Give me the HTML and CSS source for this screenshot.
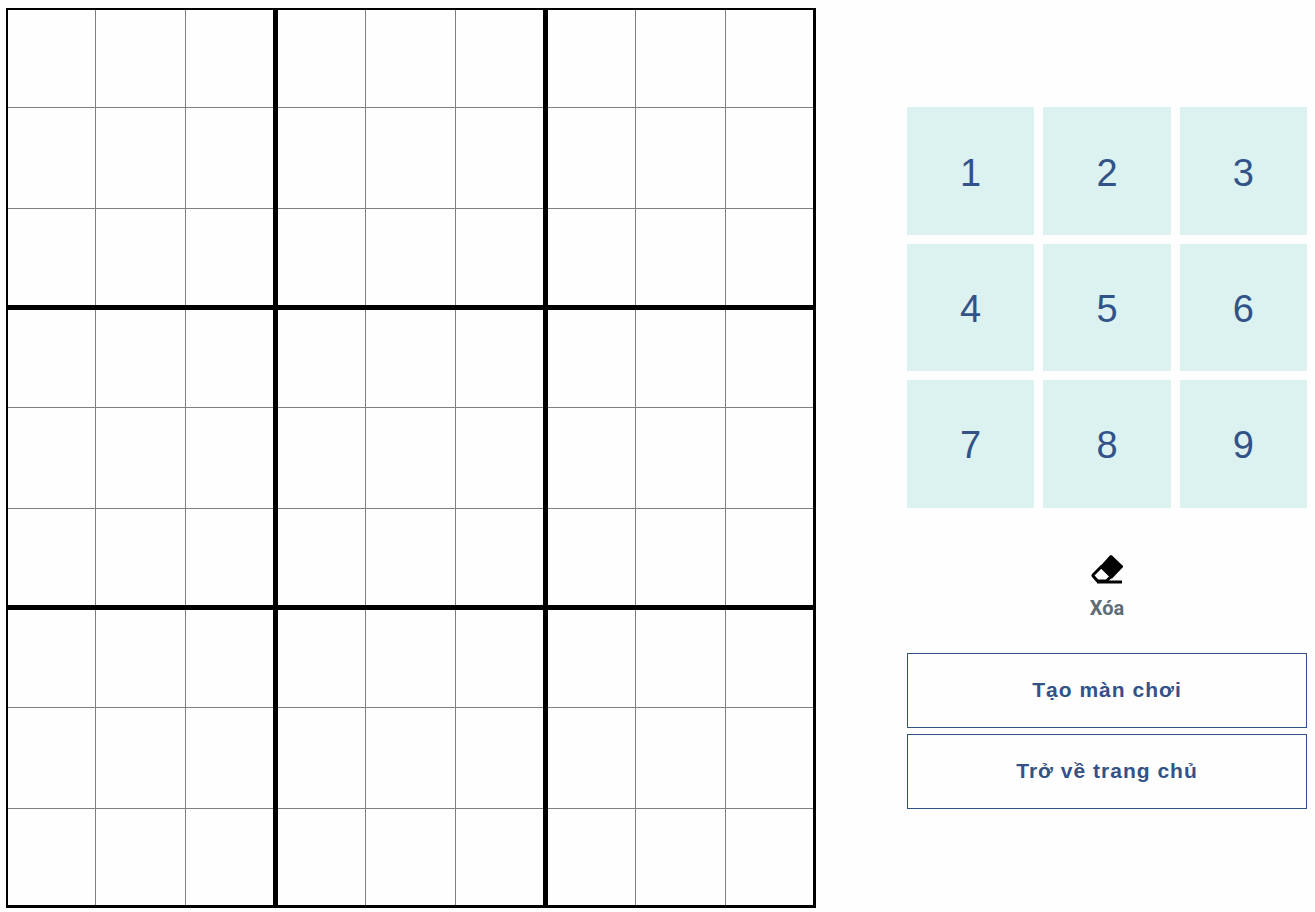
FILE: index.html
```html
<!DOCTYPE html>
<html lang="vi">
<head>
<meta charset="utf-8">
<meta name="viewport" content="width=device-width, initial-scale=1">
<title>Sudoku</title>
<link rel="stylesheet" href="styles.css">
</head>
<body>
<main class="game">
  <section class="board" aria-label="Sudoku">
    <div class="block"><div class="cell"></div><div class="cell"></div><div class="cell"></div><div class="cell"></div><div class="cell"></div><div class="cell"></div><div class="cell"></div><div class="cell"></div><div class="cell"></div></div>
    <div class="block"><div class="cell"></div><div class="cell"></div><div class="cell"></div><div class="cell"></div><div class="cell"></div><div class="cell"></div><div class="cell"></div><div class="cell"></div><div class="cell"></div></div>
    <div class="block"><div class="cell"></div><div class="cell"></div><div class="cell"></div><div class="cell"></div><div class="cell"></div><div class="cell"></div><div class="cell"></div><div class="cell"></div><div class="cell"></div></div>
    <div class="block"><div class="cell"></div><div class="cell"></div><div class="cell"></div><div class="cell"></div><div class="cell"></div><div class="cell"></div><div class="cell"></div><div class="cell"></div><div class="cell"></div></div>
    <div class="block"><div class="cell"></div><div class="cell"></div><div class="cell"></div><div class="cell"></div><div class="cell"></div><div class="cell"></div><div class="cell"></div><div class="cell"></div><div class="cell"></div></div>
    <div class="block"><div class="cell"></div><div class="cell"></div><div class="cell"></div><div class="cell"></div><div class="cell"></div><div class="cell"></div><div class="cell"></div><div class="cell"></div><div class="cell"></div></div>
    <div class="block"><div class="cell"></div><div class="cell"></div><div class="cell"></div><div class="cell"></div><div class="cell"></div><div class="cell"></div><div class="cell"></div><div class="cell"></div><div class="cell"></div></div>
    <div class="block"><div class="cell"></div><div class="cell"></div><div class="cell"></div><div class="cell"></div><div class="cell"></div><div class="cell"></div><div class="cell"></div><div class="cell"></div><div class="cell"></div></div>
    <div class="block"><div class="cell"></div><div class="cell"></div><div class="cell"></div><div class="cell"></div><div class="cell"></div><div class="cell"></div><div class="cell"></div><div class="cell"></div><div class="cell"></div></div>
  </section>
  <section class="controls">
    <div class="keypad">
      <button class="key" type="button">1</button>
      <button class="key" type="button">2</button>
      <button class="key" type="button">3</button>
      <button class="key" type="button">4</button>
      <button class="key" type="button">5</button>
      <button class="key" type="button">6</button>
      <button class="key" type="button">7</button>
      <button class="key" type="button">8</button>
      <button class="key" type="button">9</button>
    </div>
    <button class="erase" type="button">
      <svg class="erase-icon" viewBox="0 0 32 32" aria-hidden="true">
        <path d="M20 2.500 30.500 12.500 20.500 23 10.500 13Z" fill="#000" stroke="#000" stroke-width="3" stroke-linejoin="round"/>
        <path d="M11 12 2.500 20.500Q1.500 21.500 2.500 22.500L6.500 27H15.500L20 22.500" fill="none" stroke="#000" stroke-width="3" stroke-linejoin="round"/>
        <path d="M6 28H31" stroke="#000" stroke-width="3"/>
      </svg>
      <span>Xóa</span>
    </button>
    <div class="actions">
      <button class="action" type="button">Tạo màn chơi</button>
      <button class="action" type="button">Trở về trang chủ</button>
    </div>
  </section>
</main>
</body>
</html>
```
FILE: styles.css
```css
* { box-sizing: border-box; }

body {
  margin: 0;
  background: #fefefe;
  font-family: "Liberation Sans", Arial, sans-serif;
  color: #325288;
}

button {
  margin: 0;
  padding: 0;
  border: 0;
  background: none;
  color: inherit;
  font: inherit;
  cursor: pointer;
}

.game {
  display: grid;
  grid-template-columns: 81fr 40fr;
  column-gap: 91px;
  align-items: center;
  padding: 8px 8px 4px 6px;
}

.board {
  display: grid;
  grid-template: repeat(3, 1fr) / repeat(3, 1fr);
  gap: 5px;
  padding: 2px 3px 3px 2px;
  aspect-ratio: 9 / 10;
  background: #000;
}

.block {
  display: grid;
  grid-template: 97fr 100fr 96fr / 87fr 89fr 87fr;
  gap: 1px;
  background: #808080;
}

.cell { background: #fefefe; }

.keypad {
  display: grid;
  grid-template-columns: repeat(3, 1fr);
  gap: 9px;
}

.key {
  aspect-ratio: 1;
  padding-top: 4px;
  background: #dcf2f0;
  font-size: 38px;
}

.key:hover { background: #cdebe8; }

.erase {
  display: flex;
  flex-direction: column;
  align-items: center;
  gap: 8px;
  margin: 46px auto 31px;
  color: #5d6d77;
  font: bold 20px/28px Roboto, sans-serif;
}

.erase-icon {
  width: 32px;
  height: 32px;
}

.actions {
  display: grid;
  gap: 6px;
}

.action {
  min-height: 75px;
  border: 1px solid #325288;
  font-size: 21px;
  font-weight: bold;
  letter-spacing: 1px;
}

.action:hover { background: #eef4fa; }
```
